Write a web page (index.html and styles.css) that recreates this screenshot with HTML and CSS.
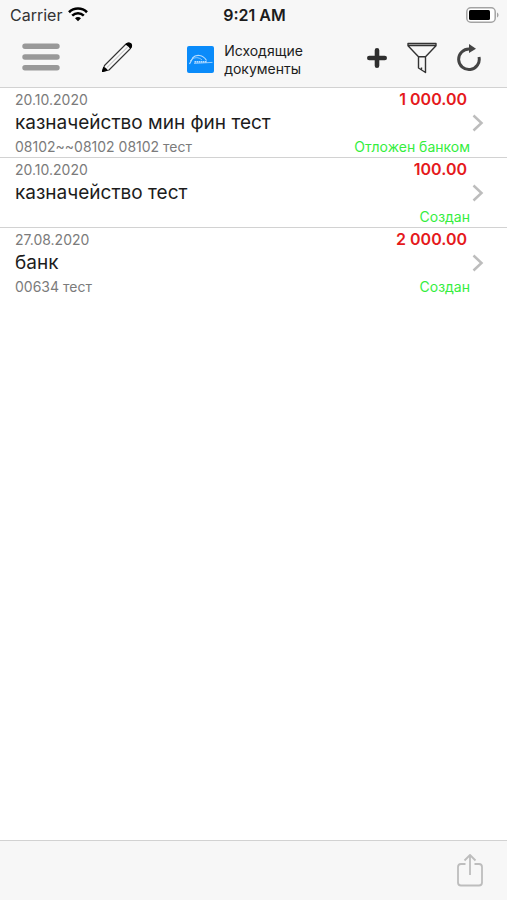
FILE: index.html
```html
<!DOCTYPE html>
<html lang="ru">
<head>
<meta charset="utf-8">
<meta name="viewport" content="width=device-width, initial-scale=1">
<title>Исходящие документы</title>
<link rel="stylesheet" href="styles.css">
</head>
<body>
<header class="top">
  <div class="status-bar">
    <div class="carrier">
      <span>Carrier</span>
      <svg width="20" height="15" viewBox="0 0 20 15" fill="none" stroke="#000" stroke-width="2.6" aria-hidden="true">
        <path d="M1 5.2C6 .3 14 .3 19 5.2"/>
        <path d="M4.2 8.6C7.6 5.4 12.4 5.4 15.8 8.6"/>
        <path d="M7 11.2C8.8 9.6 11.2 9.6 13 11.2L10 14.3Z" fill="#000" stroke="none"/>
      </svg>
    </div>
    <div class="clock">9:21 AM</div>
    <svg class="battery" width="33" height="16" viewBox="0 0 33 16" aria-hidden="true">
      <rect x=".8" y=".8" width="28.4" height="14.4" rx="4" fill="#fff" stroke="#a3a3a3" stroke-width="1.5"/>
      <rect x="3" y="3" width="21" height="10" rx="1.5" fill="#000"/>
      <path d="M31 5.5c2 .8 2 4.2 0 5z" fill="#a3a3a3"/>
    </svg>
  </div>
  <nav class="toolbar">
    <div class="group start">
      <button class="icon" type="button" aria-label="Меню">
        <svg width="38" height="30" viewBox="0 0 38 30" stroke="#999" stroke-width="5.4" stroke-linecap="round"><path d="M3 3.2h32M3 14h32M3 24.8h32"/></svg>
      </button>
      <button class="icon" type="button" aria-label="Изменить">
        <svg width="32" height="32" viewBox="0 0 32 32" fill="none" stroke="#333" stroke-width="1.1" stroke-linejoin="round">
          <path d="M1.5 29.5L3.5 23.5L24.5 2.5Q27.5 0 29.8 1.8Q31.5 4 29 7L8 28Z" fill="#fafafa"/>
          <path d="M6 25.5L26.8 4.8" stroke="#888" stroke-width=".6"/>
          <path d="M25 2.2Q27.5 0 29.8 1.8Q31.5 4 29.5 6.2Q28 4 25 2.2Z" fill="#000" stroke="#000"/>
          <path d="M1.5 29.5L2.6 25.5Q5 26 6 28.3Z" fill="#000" stroke="#000"/>
        </svg>
      </button>
    </div>
    <div class="heading">
      <svg width="27" height="27" viewBox="0 0 27 27" fill="none" aria-hidden="true">
        <rect width="27" height="27" rx="2" fill="#0a8bfa"/>
        <g stroke="#b5dcff">
          <path d="M2.5 18L6 11.5M5.5 12C9 8 16 8.5 19.5 14.5" stroke-width="1.2"/>
          <path d="M3 15C7 10.5 12 11 15 14" stroke-width=".7"/>
          <path d="M7.5 15.8H20" stroke-width="1.8" stroke-dasharray="1.6 .5"/>
          <path d="M7 17.4L25.5 16.4" stroke-width=".8"/>
        </g>
      </svg>
      <h1>Исходящие<br>документы</h1>
    </div>
    <div class="group end">
      <button class="icon" type="button" aria-label="Добавить">
        <svg width="20" height="20" viewBox="0 0 20 20" stroke="#2e2e2e" stroke-width="4.6" stroke-linecap="round"><path d="M10 2.3v15.4M2.3 10h15.4"/></svg>
      </button>
      <button class="icon" type="button" aria-label="Фильтр">
        <svg width="30" height="32" viewBox="0 0 30 32" fill="none" stroke="#333" stroke-width="1.4" stroke-linejoin="round"><path d="M1 1.5H29V3.7L18.5 14.8H11.5L1 3.7ZM1 3.5H29M11.5 14.8V26L18.5 30.5V14.8M14.5 25.5V28"/></svg>
      </button>
      <button class="icon" type="button" aria-label="Обновить">
        <svg width="24" height="28" viewBox="0 0 24 28"><path d="M22 13A10.3 10.3 0 1 1 12.5 5" fill="none" stroke="#444" stroke-width="3"/><path d="M12 0L19 4.8L12 9Z" fill="#444"/></svg>
      </button>
    </div>
  </nav>
</header>
<main>
  <ul class="documents">
    <li><a class="document" href="#">
      <span class="date">20.10.2020</span><span class="amount">1 000.00</span>
      <span class="name">казначейство мин фин тест</span>
      <svg class="chevron" width="12" height="18" viewBox="0 0 12 18" fill="none" stroke="#bdbdbd" stroke-width="2.5" aria-hidden="true"><path d="M1.5 1.5L9.5 9L1.5 16.5"/></svg>
      <span class="note">08102~~08102 08102 тест</span><span class="state">Отложен банком</span>
    </a></li>
    <li><a class="document" href="#">
      <span class="date">20.10.2020</span><span class="amount">100.00</span>
      <span class="name">казначейство тест</span>
      <svg class="chevron" width="12" height="18" viewBox="0 0 12 18" fill="none" stroke="#bdbdbd" stroke-width="2.5" aria-hidden="true"><path d="M1.5 1.5L9.5 9L1.5 16.5"/></svg>
      <span class="note"></span><span class="state">Создан</span>
    </a></li>
    <li><a class="document" href="#">
      <span class="date">27.08.2020</span><span class="amount">2 000.00</span>
      <span class="name">банк</span>
      <svg class="chevron" width="12" height="18" viewBox="0 0 12 18" fill="none" stroke="#bdbdbd" stroke-width="2.5" aria-hidden="true"><path d="M1.5 1.5L9.5 9L1.5 16.5"/></svg>
      <span class="note">00634 тест</span><span class="state">Создан</span>
    </a></li>
  </ul>
</main>
<footer class="bottom">
  <button class="icon" type="button" aria-label="Поделиться">
    <svg width="26" height="34" viewBox="0 0 26 34" fill="none" stroke="#bdbdbd" stroke-width="1.8" stroke-linejoin="round"><path d="M8.5 10H4Q1 10 1 13V28.5Q1 31.5 4 31.5H22Q25 31.5 25 28.5V13Q25 10 22 10H17.5M13 21V1M7.5 6.5L13 1L18.5 6.5"/></svg>
  </button>
</footer>
</body>
</html>
```
FILE: styles.css
```css
* {
  box-sizing: border-box;
}

body {
  margin: 0;
  min-height: 100vh;
  display: flex;
  flex-direction: column;
  background: #fff;
  color: #1c1c1c;
  font-family: Inter, "Liberation Sans", sans-serif;
}

.top {
  background: #f7f7f7;
  border-bottom: 1px solid #d2d2d2;
}

.status-bar {
  display: grid;
  grid-template-columns: 1fr auto 1fr;
  align-items: center;
  height: 29px;
  padding: 0 8px 0 10px;
  font-size: 16px;
}

.carrier {
  display: flex;
  align-items: center;
  gap: 6px;
  color: #333;
}

.clock {
  font-weight: 600;
}

.battery {
  justify-self: end;
}

.toolbar {
  display: flex;
  align-items: center;
  justify-content: space-between;
  height: 58px;
  padding: 0 26px 0 22px;
}

.group,
.heading {
  display: flex;
  align-items: center;
}

.start {
  gap: 41px;
}

.end {
  gap: 20px;
}

.heading {
  gap: 10px;
  padding: 3px 10px 0 0;
}

h1 {
  margin: 0;
  font-size: 14px;
  font-weight: 400;
  line-height: 18px;
}

.icon {
  display: flex;
  padding: 0;
  border: 0;
  background: none;
}

main {
  flex: 1;
}

.documents {
  margin: 0;
  padding: 0;
  list-style: none;
}

.documents li + li {
  border-top: 1px solid #d2d2d2;
}

.document {
  display: grid;
  grid-template-columns: 1fr auto 12px;
  grid-template-rows: 22px 25px 22px;
  column-gap: 2px;
  align-items: center;
  padding: 0 23px 0 15px;
  color: inherit;
  text-decoration: none;
}

.date,
.note {
  color: #7b7b7b;
  font-size: 14px;
}

.note {
  grid-column: 1;
}

.amount {
  grid-column: 2;
  padding-right: 3px;
  color: #e5191c;
  font-size: 16px;
  font-weight: 600;
  text-align: right;
}

.name {
  grid-column: 1 / 3;
  font-size: 19px;
}

.chevron {
  grid-column: 3;
}

.state {
  grid-column: 2;
  color: #35ee3e;
  font-size: 14px;
  text-align: right;
}

.bottom {
  display: flex;
  align-items: center;
  justify-content: flex-end;
  height: 60px;
  padding: 0 24px;
  border-top: 1px solid #d2d2d2;
  background: #f7f7f7;
}
```
